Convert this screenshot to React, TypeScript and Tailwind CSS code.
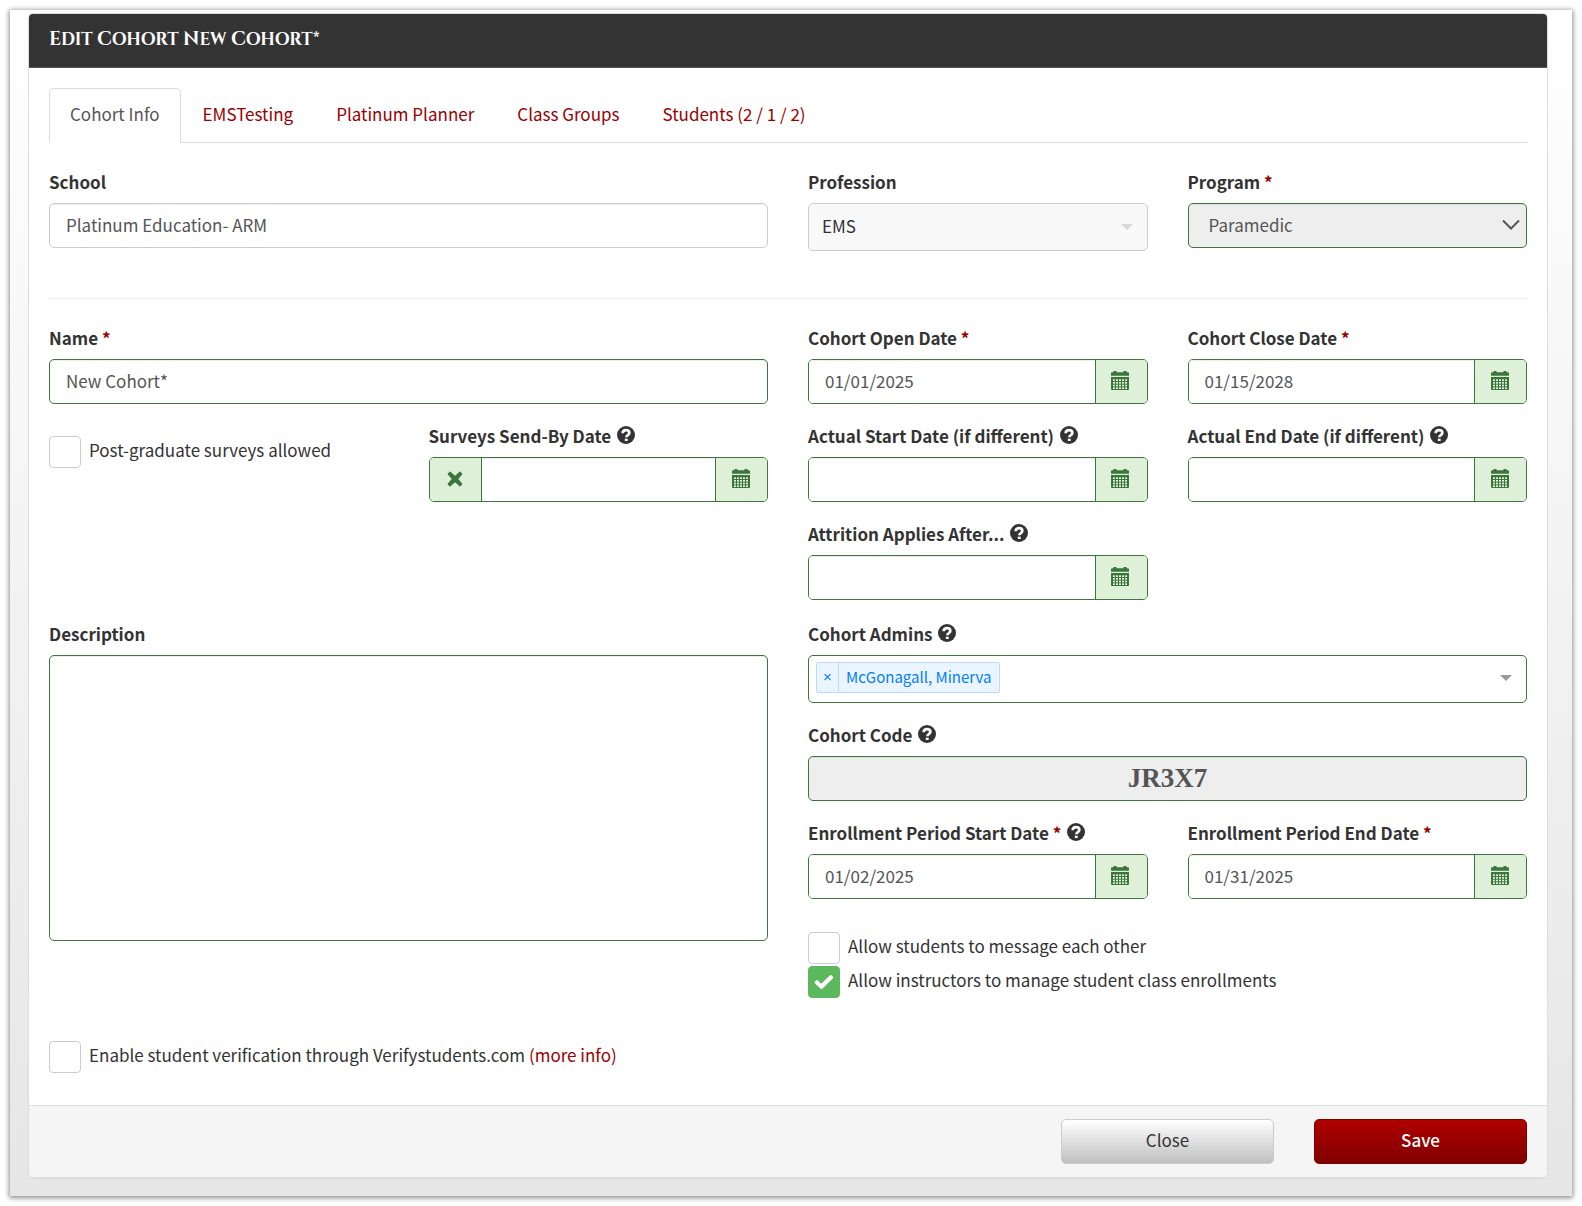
import * as React from "react";
import { clsx } from "clsx";

const CONTROL =
  "block h-[45px] w-full min-w-0 rounded-[5px] border border-[#3c763d] bg-white px-4 pb-0.5 text-[17px] text-[#555] shadow-[inset_0_1px_1px_rgba(0,0,0,0.075)] outline-none";

const ADDON =
  "flex w-[52px] shrink-0 items-center justify-center bg-[#dff0d8] pb-0.5 text-[#3c763d]";

const CALENDAR_COLS = [6, 15, 24, 33, 42];
const CALENDAR_ROWS = [25, 33, 41, 49];

function CalendarIcon() {
  return (
    <svg width="18" height="19" viewBox="0 0 54 57" aria-hidden>
      <path
        fill="currentColor"
        d="M0 14V7q0-3 3-3h4V2q0-2 2-2h6q2 0 2 2v2h20V2q0-2 2-2h6q2 0 2 2v2h4q3 0 3 3v7z"
      />
      <path fill="currentColor" d="M0 18h54v36q0 3-3 3H3q-3 0-3-3z" />
      {CALENDAR_ROWS.map((y) =>
        CALENDAR_COLS.map((x) => (
          <rect key={`${x}-${y}`} x={x} y={y} width="6" height="5" fill="#dff0d8" />
        )),
      )}
    </svg>
  );
}

function RemoveIcon() {
  return (
    <svg width="16" height="16" viewBox="0 0 48 48" aria-hidden>
      <path
        fill="currentColor"
        d="M10.500 2.500 24 14 37.500 2.500q1.500-1.500 3 0l5 5q1.500 1.500 0 3L34 24l11.500 13.500q1.500 1.500 0 3l-5 5q-1.500 1.500-3 0L24 34 10.500 45.500q-1.500 1.500-3 0l-5-5q-1.500-1.500 0-3L14 24 2.500 10.500q-1.500-1.500 0-3l5-5q1.500-1.500 3 0z"
      />
    </svg>
  );
}

function CheckIcon() {
  return (
    <svg width="20" height="16" viewBox="0 0 60 48" aria-hidden>
      <path
        fill="currentColor"
        d="M2.500 23.500 7 19q2-2 4 0l11 10.500L48 4q2-2 4 0l5 4.500q2 2 0 4L25 44q-2.500 2.500-5 0L2.500 28q-2-2.500 0-4.500z"
      />
    </svg>
  );
}

function HelpIcon() {
  return (
    <svg width="18" height="18" viewBox="0 0 54 54" aria-hidden>
      <circle cx="27" cy="27" r="27" fill="#333" />
      <path
        fill="none"
        stroke="#fff"
        strokeWidth="8"
        d="M17 22q0-9.500 10-9.500t10 8q0 4-4.500 7-4.500 2.500-4.500 6.500"
      />
      <path fill="#fff" d="M23.500 38h8.500v7h-8.500z" />
    </svg>
  );
}

type FieldProps = {
  id: string;
  label: string;
  required?: boolean;
  help?: boolean;
  className?: string;
  children: React.ReactNode;
};

function Field({ id, label, required, help, className, children }: FieldProps) {
  return (
    <div className={className}>
      <div className="flex h-[31px] items-start gap-1.5">
        <label htmlFor={id} className="font-bold leading-5">
          {label}
          {required ? <span className="text-[#900]"> *</span> : null}
        </label>
        {help ? (
          <button type="button" aria-label={`${label} help`} className="shrink-0">
            <HelpIcon />
          </button>
        ) : null}
      </div>
      {children}
    </div>
  );
}

type DateFieldProps = Omit<FieldProps, "children"> & {
  value?: string;
  clearable?: boolean;
};

function DateField({ value = "", clearable, ...field }: DateFieldProps) {
  return (
    <Field {...field}>
      <div className="flex h-[45px] overflow-hidden rounded-[5px] border border-[#3c763d]">
        {clearable ? (
          <button
            type="button"
            aria-label="Clear date"
            className={clsx(ADDON, "border-r border-[#3c763d]")}
          >
            <RemoveIcon />
          </button>
        ) : null}
        <input
          id={field.id}
          type="text"
          defaultValue={value}
          className="w-full min-w-0 bg-white px-4 pb-0.5 text-[17px] text-[#555] shadow-[inset_0_1px_1px_rgba(0,0,0,0.075)] outline-none"
        />
        <button
          type="button"
          aria-label="Open calendar"
          className={clsx(ADDON, "border-l border-[#3c763d] pr-0.5")}
        >
          <CalendarIcon />
        </button>
      </div>
    </Field>
  );
}

type CheckFieldProps = {
  id: string;
  checked?: boolean;
  className?: string;
  children: React.ReactNode;
};

function CheckField({ id, checked, className, children }: CheckFieldProps) {
  return (
    <div className={clsx("flex items-start gap-2", className)}>
      <span className="relative size-8 shrink-0">
        <input
          id={id}
          type="checkbox"
          defaultChecked={checked}
          className="peer block size-8 appearance-none rounded border border-[#ccc] bg-white checked:border-[#5cb85c] checked:bg-[#5cb85c]"
        />
        <span className="pointer-events-none absolute inset-0 hidden items-center justify-center text-white peer-checked:flex">
          <CheckIcon />
        </span>
      </span>
      <label htmlFor={id} className="leading-7">
        {children}
      </label>
    </div>
  );
}

const TABS = [
  "Cohort Info",
  "EMSTesting",
  "Platinum Planner",
  "Class Groups",
  "Students (2 / 1 / 2)",
];

function Tabs() {
  return (
    <nav className="flex gap-px border-b border-[#ddd]">
      {TABS.map((tab, i) => (
        <a
          key={tab}
          href="#"
          aria-current={i === 0 ? "page" : undefined}
          className={clsx(
            "-mb-px h-[55px] rounded-t-[5px] border px-5 pt-3 leading-[26px]",
            i === 0
              ? "border-[#ddd] border-b-white bg-white text-[#555]"
              : "border-transparent text-[#900]",
          )}
        >
          {tab}
        </a>
      ))}
    </nav>
  );
}

function Title({ text }: { text: string }) {
  return (
    <h1 className="font-['Cinzel','Liberation_Serif',serif] text-[17px] font-bold leading-6 text-white uppercase">
      {text.split(" ").map((word, i) => (
        <React.Fragment key={i}>
          {i > 0 ? " " : null}
          <span className="inline-block first-letter:text-[19px]">{word}</span>
        </React.Fragment>
      ))}
    </h1>
  );
}

export default function App() {
  return (
    <div className="bg-white p-2.5 font-['Source_Sans_Pro','Noto_Sans_CJK_SC',sans-serif] text-[17px] text-[#333]">
      <div className="bg-linear-to-b from-white to-[#e6e6e6] pt-[3px] pr-6 pb-[18px] pl-[18px] shadow-[0_1px_5px_1px_rgba(0,0,0,0.45)]">
        <form
          className="overflow-hidden rounded-[5px] border border-[#ddd] bg-white shadow-[0_1px_1px_rgba(0,0,0,0.05)]"
          onSubmit={(e) => e.preventDefault()}
        >
          <header className="h-[54px] border-b border-[#555] bg-[#333] px-5 pt-[13px]">
            <Title text="Edit Cohort New Cohort*" />
          </header>

          <div className="px-5 pt-5 pb-8">
            <Tabs />

            <div className="mt-[29px] grid grid-cols-12 gap-x-10">
              <Field id="school" label="School" className="col-span-6">
                <input
                  id="school"
                  type="text"
                  defaultValue="Platinum Education- ARM"
                  className={clsx(CONTROL, "border-[#ccc]!")}
                />
              </Field>
              <Field id="profession" label="Profession" className="col-span-3">
                <div className="relative">
                  <select
                    id="profession"
                    disabled
                    className="block h-12 w-full appearance-none rounded-[5px] border border-[#ccc] bg-[#f9f9f9] px-[13px] pb-0.5 text-[17px] text-[#333] opacity-100"
                  >
                    <option>EMS</option>
                  </select>
                  <svg
                    className="pointer-events-none absolute top-[21px] right-[15px]"
                    width="12"
                    height="6"
                    viewBox="0 0 12 6"
                    aria-hidden
                  >
                    <path d="M0 0h12L6 6z" fill="#d9d9d9" />
                  </svg>
                </div>
              </Field>
              <Field id="program" label="Program" required className="col-span-3">
                <div className="relative">
                  <select
                    id="program"
                    className={clsx(CONTROL, "appearance-none bg-[#eee]! px-5!")}
                  >
                    <option>Paramedic</option>
                  </select>
                  <svg
                    className="pointer-events-none absolute top-4 right-[7px]"
                    width="18"
                    height="12"
                    viewBox="0 0 18 12"
                    aria-hidden
                  >
                    <path
                      d="M1 1.500 9 9.500l8-8"
                      fill="none"
                      stroke="#555"
                      strokeWidth="2"
                    />
                  </svg>
                </div>
              </Field>
            </div>

            <hr className="mt-[47px] mb-[29px] border-[#eee]" />

            <div className="grid grid-cols-12 gap-x-10 gap-y-[22px]">
              <Field id="name" label="Name" required className="col-span-6">
                <input
                  id="name"
                  type="text"
                  defaultValue="New Cohort*"
                  className={CONTROL}
                />
              </Field>
              <DateField
                id="open-date"
                label="Cohort Open Date"
                required
                value="01/01/2025"
                className="col-span-3"
              />
              <DateField
                id="close-date"
                label="Cohort Close Date"
                required
                value="01/15/2028"
                className="col-span-3"
              />

              <CheckField id="surveys-allowed" className="col-span-3 pt-2.5">
                Post-graduate surveys allowed
              </CheckField>
              <DateField
                id="surveys-date"
                label="Surveys Send-By Date"
                help
                clearable
                className="col-span-3"
              />
              <DateField
                id="start-date"
                label="Actual Start Date (if different)"
                help
                className="col-span-3"
              />
              <DateField
                id="end-date"
                label="Actual End Date (if different)"
                help
                className="col-span-3"
              />

              <DateField
                id="attrition-date"
                label="Attrition Applies After..."
                help
                className="col-span-3 col-start-7"
              />
            </div>

            <div className="mt-6 grid grid-cols-2 gap-x-10">
              <Field id="description" label="Description">
                <textarea
                  id="description"
                  className="block h-[286px] w-full resize-none rounded-[5px] border border-[#3c763d] bg-white px-4 py-2 text-[#555] shadow-[inset_0_1px_1px_rgba(0,0,0,0.075)] outline-none"
                />
              </Field>

              <div>
                <div className="grid grid-cols-2 gap-x-10 gap-y-[22px]">
                  <Field id="admins" label="Cohort Admins" help className="col-span-2">
                    <div className="flex h-12 items-start rounded-[5px] border border-[#3c763d] bg-white pt-1.5 pr-[14px] pl-[7px]">
                      <span className="flex h-[31px] shrink-0 rounded-xs border border-[#b8dbff] bg-[#ebf5ff] text-[15px] leading-7 text-[#007eff]">
                        <button
                          type="button"
                          aria-label="Remove McGonagall, Minerva"
                          className="w-[22px] border-r border-[#b8dbff] pb-0.5 font-['Liberation_Sans',sans-serif]"
                        >
                          ×
                        </button>
                        <span className="px-[7px]">McGonagall, Minerva</span>
                      </span>
                      <input
                        id="admins"
                        type="text"
                        role="combobox"
                        aria-expanded={false}
                        className="h-8 min-w-0 flex-1 bg-transparent px-2 outline-none"
                      />
                      <svg
                        className="mt-[13px] shrink-0"
                        width="12"
                        height="6"
                        viewBox="0 0 12 6"
                        aria-hidden
                      >
                        <path d="M0 0h12L6 6z" fill="#999" />
                      </svg>
                    </div>
                  </Field>
                  <Field id="code" label="Cohort Code" help className="col-span-2">
                    <input
                      id="code"
                      type="text"
                      readOnly
                      defaultValue="JR3X7"
                      className={clsx(
                        CONTROL,
                        "bg-[#eee]! pb-0! text-center font-['Liberation_Serif',serif] text-[27px]! font-bold",
                      )}
                    />
                  </Field>
                  <DateField
                    id="enroll-start"
                    label="Enrollment Period Start Date"
                    required
                    help
                    value="01/02/2025"
                  />
                  <DateField
                    id="enroll-end"
                    label="Enrollment Period End Date"
                    required
                    value="01/31/2025"
                  />
                </div>

                <div className="mt-[33px] flex flex-col gap-0.5">
                  <CheckField id="allow-messages">
                    Allow students to message each other
                  </CheckField>
                  <CheckField id="allow-manage" checked>
                    Allow instructors to manage student class enrollments
                  </CheckField>
                </div>
              </div>
            </div>

            <CheckField id="verify" className="mt-[43px]">
              Enable student verification through Verifystudents.com{" "}
              <a href="#" className="text-[#900]">
                (more info)
              </a>
            </CheckField>
          </div>

          <footer className="grid grid-cols-12 gap-x-10 border-t border-[#ddd] bg-[#f5f5f5] px-5 py-[13px]">
            <button
              type="button"
              className="col-span-2 col-start-9 h-[45px] rounded-[5px] border border-[#ccc] bg-linear-to-b from-white to-[#c0c0c0] pb-[3px]"
            >
              Close
            </button>
            <button
              type="submit"
              className="col-span-2 h-[45px] rounded-[5px] border border-[#800000] bg-linear-to-b from-[#b00000] to-[#800000] pb-[3px] font-medium text-white"
            >
              Save
            </button>
          </footer>
        </form>
      </div>
    </div>
  );
}
